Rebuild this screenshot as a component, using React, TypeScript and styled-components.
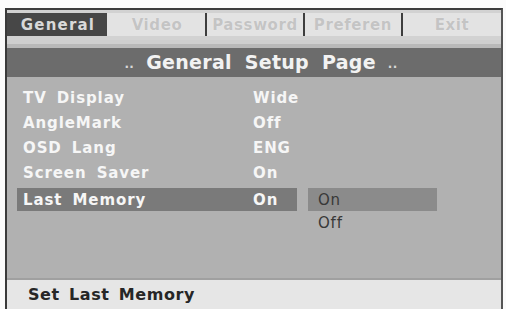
import React from "react";
import styled, { createGlobalStyle } from "styled-components";

const Global = createGlobalStyle`
  html, body { margin: 0; padding: 0; background: #ffffff; }
  body { font-family: "DejaVu Sans", "Liberation Sans", sans-serif; }
`;

const Screen = styled.div`
  width: 506px;
  height: 309px;
  overflow: hidden;
  background: #fbfbfb;
  padding-top: 8px;
  box-sizing: border-box;
`;

const Frame = styled.div`
  margin-left: 5px;
  width: 498px;
  height: 301px;
  box-sizing: border-box;
  border-top: 2px solid #3c3c3c;
  border-left: 2px solid #3a3a3a;
  border-right: 2px solid #555555;
  display: flex;
  flex-direction: column;
  background: #b1b1b1;
`;

const TabBar = styled.div`
  height: 30px;
  background: #d2d2d2;
  display: flex;
  align-items: flex-start;
  padding: 3px 0 0 0;
  box-sizing: border-box;
`;

const Tab = styled.div<{ $active?: boolean; $w: number; $sep?: boolean }>`
  width: ${(p) => p.$w}px;
  height: 23px;
  display: flex;
  align-items: center;
  justify-content: center;
  box-sizing: border-box;
  font-weight: bold;
  font-size: 15px;
  letter-spacing: ${(p) => (p.$active ? "1.2px" : "0.6px")};
  white-space: nowrap;
  overflow: hidden;
  background: ${(p) => (p.$active ? "#474747" : "#e3e3e3")};
  color: ${(p) => (p.$active ? "#d9d9d9" : "#c4c4c4")};
  border-left: ${(p) => (p.$sep ? "2px solid #3e3e3e" : "2px solid transparent")};
  text-shadow: ${(p) => (p.$active ? "none" : "0 0 1px #f4f4f4")};
`;

const Strip = styled.div`
  height: 8px;
  background: linear-gradient(#cfcfcf 0 50%, #b9b9b9 50% 100%);
`;

const TitleBar = styled.div`
  height: 29px;
  background: #6c6c6c;
  color: #f2f2f2;
  font-weight: bold;
  font-size: 19px;
  letter-spacing: 0.3px;
  word-spacing: 6px;
  display: flex;
  align-items: center;
  justify-content: center;
  padding-left: 14px;
  padding-bottom: 2px;
  box-sizing: border-box;
`;

const Dots = styled.span`
  font-size: 12px;
  color: #d8d8d8;
  align-self: flex-end;
  padding-bottom: 4px;
  margin: 0 12px;
`;

const Body = styled.div`
  flex: 1;
  display: grid;
  grid-template-columns: 280px 129px;
  column-gap: 11px;
  align-items: start;
  padding: 8px 0 0 10px;
  background: #b1b1b1;
  border-bottom: 2px solid #a0a0a0;
`;

const List = styled.div`
  display: flex;
  flex-direction: column;
`;

const Row = styled.div<{ $selected?: boolean }>`
  height: ${(p) => (p.$selected ? 23 : 25)}px;
  margin-top: ${(p) => (p.$selected ? 3 : 0)}px;
  display: grid;
  grid-template-columns: 236px 1fr;
  align-items: center;
  background: ${(p) => (p.$selected ? "#7a7a7a" : "transparent")};
  color: #f6f6f6;
  font-weight: bold;
  font-size: 15px;
  letter-spacing: 0.9px;
`;

const Label = styled.span`
  padding-left: 6px;
  white-space: nowrap;
  word-spacing: 4px;
`;

const Value = styled.span`
  white-space: nowrap;
`;

const SubMenu = styled.div`
  margin-top: 103px;
  display: flex;
  flex-direction: column;
`;

const SubItem = styled.div<{ $selected?: boolean }>`
  height: ${(p) => (p.$selected ? 23 : 24)}px;
  display: flex;
  align-items: center;
  padding-left: 10px;
  background: ${(p) => (p.$selected ? "#8b8b8b" : "transparent")};
  color: #383838;
  font-size: 15px;
  letter-spacing: 0.8px;
`;

const StatusBar = styled.div`
  height: 29px;
  background: #e6e6e6;
  color: #262626;
  font-weight: bold;
  font-size: 16px;
  letter-spacing: 0.6px;
  word-spacing: 3px;
  display: flex;
  align-items: center;
  padding-left: 21px;
  box-sizing: border-box;
`;

const tabs = [
  { name: "General", w: 100, active: true },
  { name: "Video", w: 98 },
  { name: "Password", w: 98, sep: true },
  { name: "Preferen", w: 98, sep: true },
  { name: "Exit", w: 100, sep: true },
];

const rows = [
  { label: "TV Display", value: "Wide" },
  { label: "AngleMark", value: "Off" },
  { label: "OSD Lang", value: "ENG" },
  { label: "Screen Saver", value: "On" },
  { label: "Last Memory", value: "On", selected: true },
];

export default function App() {
  return (
    <>
      <Global />
      <Screen>
        <Frame>
          <TabBar>
            {tabs.map((t) => (
              <Tab key={t.name} $w={t.w} $active={t.active} $sep={t.sep}>
                {t.name}
              </Tab>
            ))}
          </TabBar>
          <Strip />
          <TitleBar>
            <Dots>..</Dots>
            General Setup Page
            <Dots>..</Dots>
          </TitleBar>
          <Body>
            <List>
              {rows.map((r) => (
                <Row key={r.label} $selected={r.selected}>
                  <Label>{r.label}</Label>
                  <Value>{r.value}</Value>
                </Row>
              ))}
            </List>
            <SubMenu>
              <SubItem $selected>On</SubItem>
              <SubItem>Off</SubItem>
            </SubMenu>
          </Body>
          <StatusBar>Set Last Memory</StatusBar>
        </Frame>
      </Screen>
    </>
  );
}
